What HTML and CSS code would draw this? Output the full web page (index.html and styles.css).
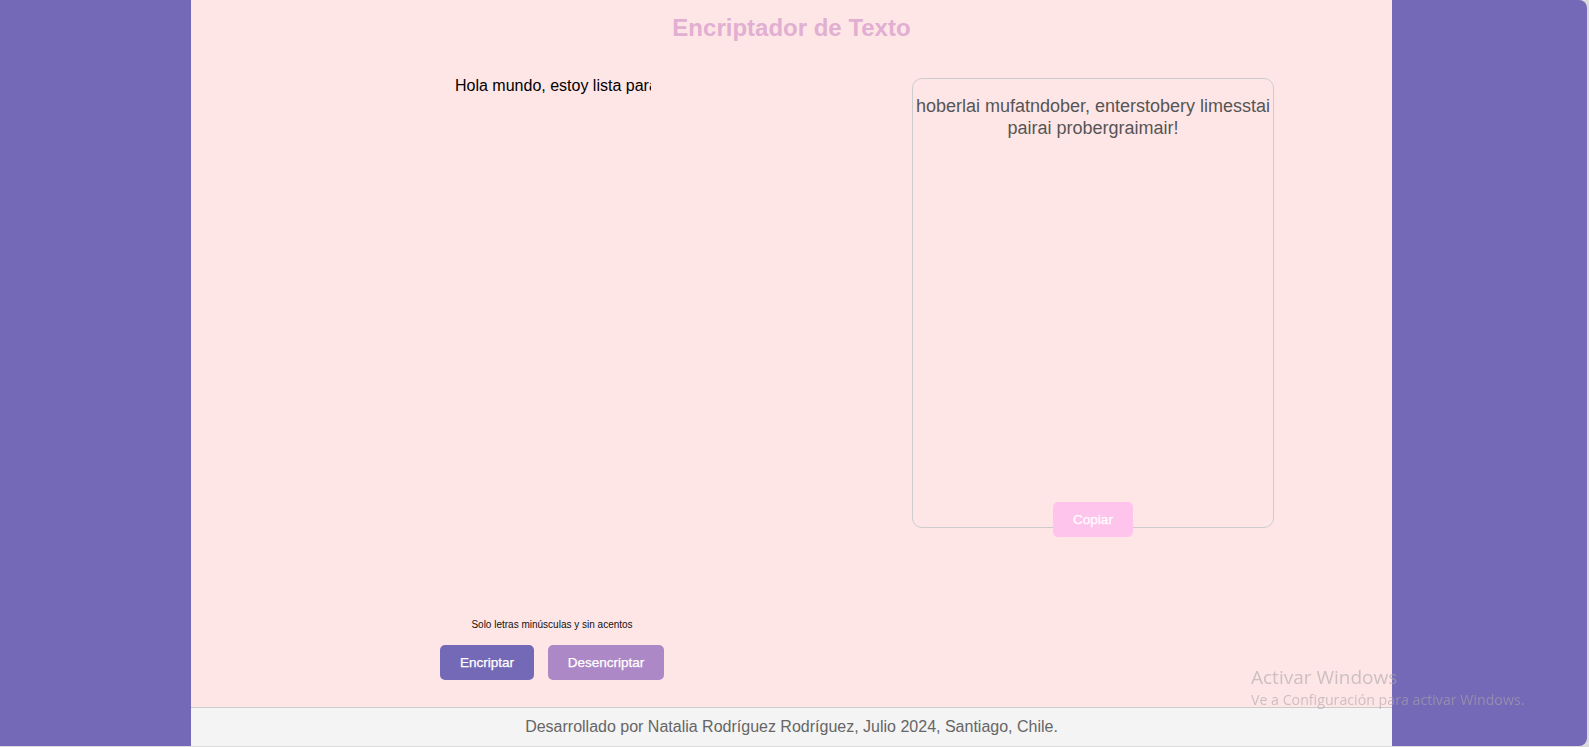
FILE: index.html
```html
<!DOCTYPE html>
<html lang="es">
<head>
<meta charset="utf-8">
<title>Encriptador de Texto</title>
<link rel="stylesheet" href="styles.css">
</head>
<body>
<div class="window">
  <div class="main">
    <h1 class="title">Encriptador de Texto</h1>
    <div class="content">
      <div class="left">
        <textarea class="input" wrap="off" spellcheck="false">Hola mundo, estoy lista para programar!</textarea>
        <p class="note">Solo letras minúsculas y sin acentos</p>
        <div class="actions">
          <button class="btn btn-enc">Encriptar</button>
          <button class="btn btn-dec">Desencriptar</button>
        </div>
      </div>
      <div class="output">
        <p class="result">hoberlai mufatndober, enterstobery limesstai pairai probergraimair!</p>
        <button class="btn btn-copy">Copiar</button>
      </div>
    </div>
    <footer class="footer">Desarrollado por Natalia Rodríguez Rodríguez, Julio 2024, Santiago, Chile.</footer>
  </div>
</div>
<div class="activate">
  <div class="activate-title">Activar Windows</div>
  <div class="activate-sub">Ve a Configuración para activar Windows.</div>
</div>
</body>
</html>
```
FILE: styles.css
```css
html, body {
  margin: 0;
  padding: 0;
}
body {
  background: #dcdcdc;
  font-family: "Liberation Sans", Arial, sans-serif;
  height: 747px;
  overflow: hidden;
}
.window {
  width: 1587px;
  height: 746px;
  background: #7469b6;
  border-top-right-radius: 8px;
  border-bottom-right-radius: 8px;
  display: flex;
  padding-left: 191px;
  box-sizing: border-box;
}
.main {
  width: 1201px;
  height: 746px;
  background: #ffe6e6;
  display: flex;
  flex-direction: column;
}
.title {
  margin: 0;
  padding-top: 14px;
  line-height: 28px;
  font-size: 24px;
  font-weight: bold;
  text-align: center;
  color: #e1afd1;
}
.content {
  flex: 1;
  display: flex;
  align-items: flex-start;
  padding-left: 249px;
  gap: 248px;
}
.left {
  width: 224px;
  height: 603px;
  margin-top: 35px;
  display: flex;
  flex-direction: column;
  align-items: center;
}
.input {
  flex: 1;
  width: 198px;
  padding: 0 0 0 2px;
  margin: 0;
  border: none;
  outline: none;
  background: transparent;
  resize: none;
  overflow: hidden;
  font-family: "Liberation Sans", Arial, sans-serif;
  font-size: 16px;
  line-height: 18px;
  color: #000;
  box-sizing: border-box;
}
.note {
  margin: 9px 0 0;
  font-size: 10px;
  line-height: 12px;
  color: #111;
}
.actions {
  margin-top: 14px;
  display: flex;
  gap: 14px;
}
.btn {
  height: 35px;
  border: none;
  border-radius: 5px;
  color: #fff;
  font-family: "Liberation Sans", Arial, sans-serif;
  font-size: 13.5px;
  -webkit-text-stroke: 0.25px #fff;
  padding: 0;
  cursor: pointer;
}
.btn-enc {
  width: 94px;
  background: #7469b6;
}
.btn-dec {
  width: 116px;
  background: #ad88c6;
}
.output {
  margin-top: 36px;
  width: 362px;
  height: 450px;
  box-sizing: border-box;
  border: 1px solid #cccccc;
  border-radius: 10px;
  padding: 16px 2px 0;
  display: flex;
  flex-direction: column;
  align-items: center;
}
.result {
  margin: 0;
  font-size: 18px;
  line-height: 22px;
  color: #555;
  text-align: center;
}
.btn-copy {
  margin-top: auto;
  margin-bottom: -10px;
  width: 80px;
  background: #ffc4eb;
}
.footer {
  height: 39px;
  box-sizing: border-box;
  border-top: 1px solid #cccccc;
  background: #f4f4f4;
  color: #666;
  font-size: 16px;
  line-height: 38px;
  text-align: center;
}
.activate {
  position: fixed;
  left: 1251px;
  top: 665px;
  font-family: "Open Sans", "Noto Sans", sans-serif;
  color: rgba(170, 165, 170, 0.6);
  pointer-events: none;
}
.activate-title {
  font-size: 19px;
  line-height: 25px;
}
.activate-sub {
  font-size: 14.2px;
  line-height: 19px;
}
```
